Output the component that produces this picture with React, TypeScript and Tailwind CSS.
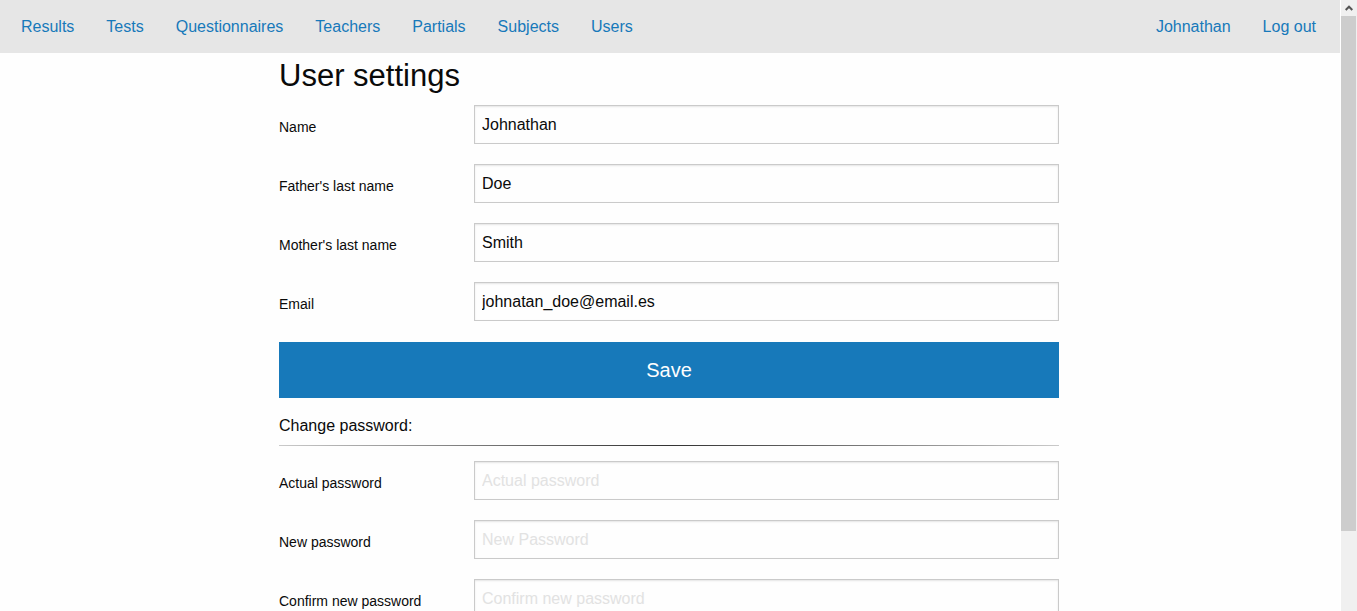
const primaryLinks = ["Results", "Tests", "Questionnaires", "Teachers", "Partials", "Subjects", "Users"];
const accountLinks = ["Johnathan", "Log out"];

type FieldProps = {
  id: string;
  label: string;
  type?: string;
  value?: string;
  placeholder?: string;
};

function Field({ id, label, type = "text", value, placeholder }: FieldProps) {
  return (
    <div className="grid grid-cols-4 items-start">
      <label htmlFor={id} className="pt-2 text-sm leading-7">
        {label}
      </label>
      <input
        id={id}
        type={type}
        defaultValue={value}
        placeholder={placeholder}
        className="col-span-3 h-[39px] w-full border border-[#cacaca] bg-[#fefefe] px-[7px] text-base text-[#0a0a0a] shadow-[inset_0_1px_2px_rgba(10,10,10,0.1)] outline-none placeholder:text-[#e2e2e2] focus:border-[#8a8a8a]"
      />
    </div>
  );
}

function NavLinks({ items }: { items: string[] }) {
  return (
    <ul className="flex gap-8">
      {items.map((item) => (
        <li key={item}>
          <a href="#" className="text-[#1779ba] hover:text-[#1468a0]">
            {item}
          </a>
        </li>
      ))}
    </ul>
  );
}

function ScrollBar() {
  return (
    <div aria-hidden="true" className="flex w-[17px] shrink-0 flex-col border-l border-white bg-[#f0f0f0] pr-px">
      <div className="flex h-4 shrink-0 items-center justify-center">
        <svg width="8" height="6" viewBox="0 0 8 6" fill="none" stroke="#555555" strokeWidth="2">
          <path d="M0.7 5 L4 1.7 L7.3 5" />
        </svg>
      </div>
      <div className="mb-4 grow">
        <div className="h-[89%] bg-[#cdcdcd]" />
      </div>
    </div>
  );
}

export default function App() {
  return (
    <div className="flex h-screen bg-[#fefefe] font-['Liberation_Sans',Arial,sans-serif] text-base text-[#0a0a0a]">
      <div className="min-w-0 grow overflow-y-auto [scrollbar-width:none]">
        <nav className="flex h-[53px] items-center justify-between bg-[#e6e6e6] pr-6 pl-[21px]">
          <NavLinks items={primaryLinks} />
          <NavLinks items={accountLinks} />
        </nav>
        <main className="pr-0.5 pb-10">
          <div className="mx-auto max-w-[780px]">
            <h1 className="mb-1.5 text-[31px] leading-[46px]">User settings</h1>
            <form className="flex flex-col gap-5" onSubmit={(e) => e.preventDefault()}>
              <Field id="name" label="Name" value="Johnathan" />
              <Field id="father" label="Father's last name" value="Doe" />
              <Field id="mother" label="Mother's last name" value="Smith" />
              <Field id="email" label="Email" value="johnatan_doe@email.es" />
              <button type="submit" className="mt-px h-14 w-full cursor-pointer bg-[#1779ba] text-xl text-[#fefefe] hover:bg-[#14679e]">
                Save
              </button>
            </form>
            <h2 className="mt-4 leading-6">Change password:</h2>
            <hr className="mt-[7px] mb-[15px] h-px border-0 bg-linear-to-r from-[#cacaca] via-[#333333] to-[#cacaca]" />
            <form className="flex flex-col gap-5" onSubmit={(e) => e.preventDefault()}>
              <Field id="actual-password" label="Actual password" type="password" placeholder="Actual password" />
              <Field id="new-password" label="New password" type="password" placeholder="New Password" />
              <Field id="confirm-password" label="Confirm new password" type="password" placeholder="Confirm new password" />
            </form>
          </div>
        </main>
      </div>
      <ScrollBar />
    </div>
  );
}
